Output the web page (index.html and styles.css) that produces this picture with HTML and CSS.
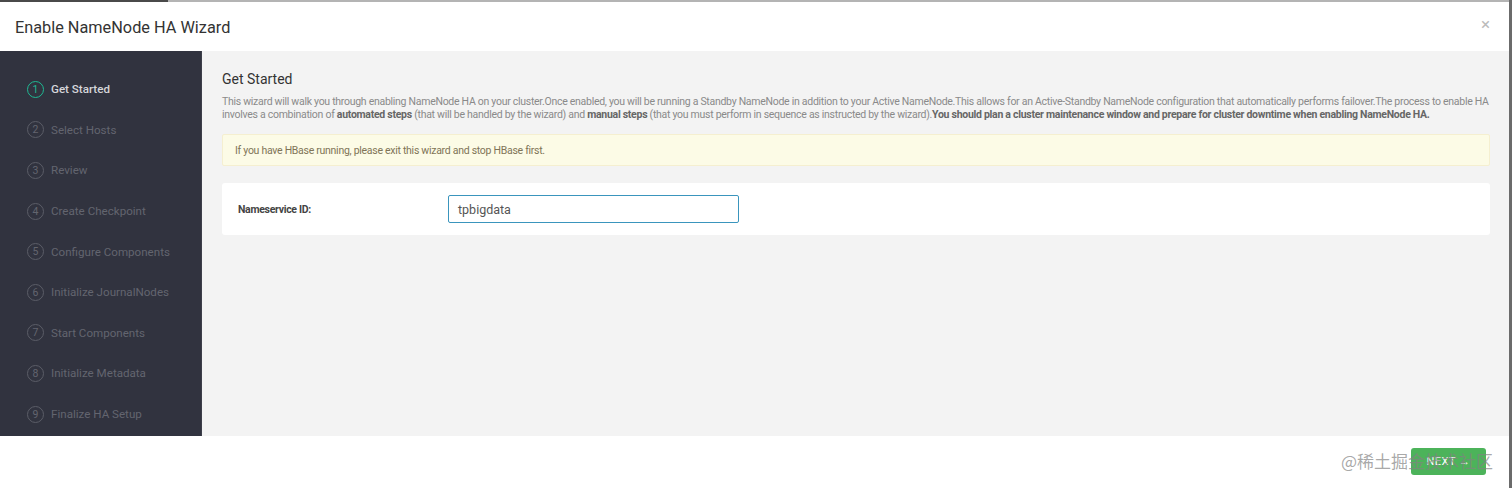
FILE: index.html
```html
<!DOCTYPE html>
<html>
<head>
<meta charset="utf-8">
<link rel="stylesheet" href="styles.css">
</head>
<body>
<div class="page">
  <div class="modal">
    <div class="topline"><div class="topline-dark"></div><div class="topline-light"></div></div>
    <div class="header">
      <h1 class="title">Enable NameNode HA Wizard</h1>
      <span class="close">×</span>
    </div>
    <div class="body">
      <ul class="steps">
        <li class="step active"><span class="num">1</span><span class="label">Get Started</span></li>
        <li class="step"><span class="num">2</span><span class="label">Select Hosts</span></li>
        <li class="step"><span class="num">3</span><span class="label">Review</span></li>
        <li class="step"><span class="num">4</span><span class="label">Create Checkpoint</span></li>
        <li class="step"><span class="num">5</span><span class="label">Configure Components</span></li>
        <li class="step"><span class="num">6</span><span class="label">Initialize JournalNodes</span></li>
        <li class="step"><span class="num">7</span><span class="label">Start Components</span></li>
        <li class="step"><span class="num">8</span><span class="label">Initialize Metadata</span></li>
        <li class="step"><span class="num">9</span><span class="label">Finalize HA Setup</span></li>
      </ul>
      <div class="content">
        <h2 class="content-title">Get Started</h2>
        <p class="intro">This wizard will walk you through enabling NameNode HA on your cluster.Once enabled, you will be running a Standby NameNode in addition to your Active NameNode.This allows for an Active-Standby NameNode configuration that automatically performs failover.The process to enable HA involves a combination of <b>automated steps</b> (that will be handled by the wizard) and <b>manual steps</b> (that you must perform in sequence as instructed by the wizard).<b>You should plan a cluster maintenance window and prepare for cluster downtime when enabling NameNode HA.</b></p>
        <div class="alert">If you have HBase running, please exit this wizard and stop HBase first.</div>
        <div class="card">
          <label class="field-label">Nameservice ID:</label>
          <div class="input">tpbigdata</div>
        </div>
      </div>
    </div>
    <div class="footer">
      <button class="next">NEXT →</button>
      <span class="watermark">@稀土掘金技术社区</span>
    </div>
  </div>
  <div class="edge"></div>
</div>
</body>
</html>
```

FILE: styles.css
```css
html, body {
  margin: 0;
  padding: 0;
  background: #ffffff;
}
body {
  font-family: Roboto, "Liberation Sans", sans-serif;
  width: 1512px;
  height: 488px;
  overflow: hidden;
}
.page {
  display: flex;
  height: 488px;
}
.modal {
  width: 1509px;
  display: flex;
  flex-direction: column;
  background: #fff;
}
.edge {
  width: 3px;
  background: #6b6b6b;
}
.topline {
  display: flex;
  height: 2px;
}
.topline-dark {
  width: 168px;
  background: #4a4a4a;
}
.topline-light {
  flex: 1;
  background: #b4b4b4;
}
.header {
  height: 49px;
  display: flex;
  align-items: center;
  justify-content: space-between;
  padding: 0 19px 0 15px;
}
.title {
  margin: 0;
  font-size: 16.3px;
  font-weight: 400;
  color: #333;
  position: relative;
  top: 1px;
}
.close {
  font-size: 17px;
  color: #bbb;
  line-height: 1;
  position: relative;
  top: -2px;
}
.body {
  height: 385px;
  display: flex;
  background: #f3f3f3;
}
.steps {
  width: 202px;
  margin: 0;
  padding: 18px 0 0 27px;
  box-sizing: border-box;
  list-style: none;
  background: #31333f;
  border-right: 1px solid #3d3f4a;
}
.step {
  display: flex;
  align-items: center;
  height: 40.6px;
  font-size: 11.6px;
  color: #63656f;
}
.num {
  width: 15px;
  height: 15px;
  border: 1.5px solid #5b5d67;
  border-radius: 50%;
  display: flex;
  align-items: center;
  justify-content: center;
  font-size: 10.5px;
  margin-right: 7px;
  flex-shrink: 0;
}
.step.active {
  color: #d5d6da;
  font-weight: 500;
}
.step.active .num {
  border-color: #1fb993;
  color: #1fb993;
  font-weight: 400;
}
.content {
  flex: 1;
  padding: 20px 19px 0 20px;
}
.content-title {
  margin: 0 0 8px;
  font-size: 14px;
  font-weight: 400;
  color: #333;
}
.intro {
  margin: 0 0 13px;
  font-size: 10.5px;
  letter-spacing: -0.28px;
  line-height: 13px;
  color: #8a8a8a;
}
.intro b {
  color: #666;
}
.alert {
  height: 32px;
  box-sizing: border-box;
  background: #fcfbe6;
  border: 1px solid #f5efd0;
  border-radius: 2px;
  padding: 0 12px;
  display: flex;
  align-items: center;
  font-size: 10.5px;
  letter-spacing: -0.28px;
  color: #7f7457;
  margin-bottom: 17px;
}
.card {
  height: 52px;
  background: #fff;
  border-radius: 3px;
  display: flex;
  align-items: center;
  padding-left: 16px;
}
.field-label {
  width: 210px;
  font-size: 10.5px;
  letter-spacing: -0.3px;
  font-weight: 700;
  color: #444;
}
.input {
  width: 291px;
  height: 28px;
  box-sizing: border-box;
  border: 1px solid #3a95bd;
  border-radius: 2px;
  padding-left: 9px;
  display: flex;
  align-items: center;
  font-size: 12.5px;
  color: #555;
}
.footer {
  flex: 1;
  position: relative;
  display: flex;
  justify-content: flex-end;
  align-items: flex-start;
  padding: 12px 23px 0 0;
}
.next {
  width: 75px;
  height: 27px;
  border: none;
  border-radius: 3px;
  background: #4cb35a;
  color: #fff;
  font-family: Roboto, sans-serif;
  font-size: 11px;
  letter-spacing: 0.5px;
}
.watermark {
  position: absolute;
  right: 16px;
  top: 12px;
  font-family: "Noto Sans CJK SC", sans-serif;
  font-size: 17px;
  color: rgba(130, 130, 130, 0.7);
  white-space: nowrap;
}
```
